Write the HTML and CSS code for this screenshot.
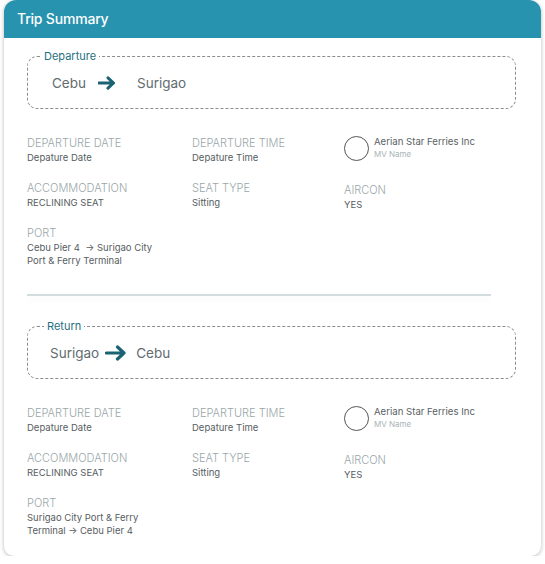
FILE: index.html
```html
<!DOCTYPE html>
<html>
<head>
<meta charset="utf-8">
<link rel="stylesheet" href="styles.css">
</head>
<body>
<div class="card">
  <div class="card-header">Trip Summary</div>
  <div class="card-body">
    <fieldset class="route">
      <legend>Departure</legend>
      <div class="route-line">
        <span class="place">Cebu</span>
        <svg class="arrow" width="18" height="14" viewBox="0 0 18 14"><path d="M1 7H15.5M10 1.8L15.5 7L10 12.2" fill="none" stroke="#1b6273" stroke-width="3" stroke-linecap="round" stroke-linejoin="round"/></svg>
        <span class="place">Surigao</span>
      </div>
    </fieldset>
    <div class="details">
      <div class="item"><div class="label">DEPARTURE DATE</div><div class="value">Depature Date</div></div>
      <div class="item"><div class="label">DEPARTURE TIME</div><div class="value">Depature Time</div></div>
      <div class="vessel"><div class="logo"></div><div><div class="vname">Aerian Star Ferries Inc</div><div class="vsub">MV Name</div></div></div>
      <div class="item"><div class="label">ACCOMMODATION</div><div class="value">RECLINING SEAT</div></div>
      <div class="item"><div class="label">SEAT TYPE</div><div class="value">Sitting</div></div>
      <div class="item low"><div class="label">AIRCON</div><div class="value">YES</div></div>
      <div class="item"><div class="label">PORT</div><div class="value">Cebu Pier 4 &nbsp;→ Surigao City<br>Port &amp; Ferry Terminal</div></div>
    </div>
    <div class="divider"></div>
    <fieldset class="route ret">
      <legend>Return</legend>
      <div class="route-line tight">
        <span class="place">Surigao</span>
        <svg class="arrow big" width="22" height="16" viewBox="0 0 22 16"><path d="M1.5 8H19M12.5 2L19 8L12.5 14" fill="none" stroke="#1b6273" stroke-width="3.2" stroke-linecap="round" stroke-linejoin="round"/></svg>
        <span class="place">Cebu</span>
      </div>
    </fieldset>
    <div class="details">
      <div class="item"><div class="label">DEPARTURE DATE</div><div class="value">Depature Date</div></div>
      <div class="item"><div class="label">DEPARTURE TIME</div><div class="value">Depature Time</div></div>
      <div class="vessel"><div class="logo"></div><div><div class="vname">Aerian Star Ferries Inc</div><div class="vsub">MV Name</div></div></div>
      <div class="item"><div class="label">ACCOMMODATION</div><div class="value">RECLINING SEAT</div></div>
      <div class="item"><div class="label">SEAT TYPE</div><div class="value">Sitting</div></div>
      <div class="item low"><div class="label">AIRCON</div><div class="value">YES</div></div>
      <div class="item"><div class="label">PORT</div><div class="value">Surigao City Port &amp; Ferry<br>Terminal → Cebu Pier 4</div></div>
    </div>
  </div>
</div>
</body>
</html>
```

FILE: styles.css
```css
* { box-sizing: border-box; }
body {
  margin: 0;
  background: #fff;
  font-family: Inter, "Liberation Sans", sans-serif;
}
.card {
  margin: 0 4px;
  width: 537px;
  height: 556px;
  background: #fff;
  border-radius: 12px 12px 10px 10px;
  box-shadow: 0 1px 4px rgba(0,0,0,0.28);
  overflow: hidden;
}
.card-header {
  height: 38px;
  background: #2793af;
  color: #fff;
  font-size: 14px;
  font-weight: 500;
  line-height: 38px;
  padding-left: 13px;
  letter-spacing: -0.2px;
}
.card-body {
  padding: 12px 25px 0 23px;
}
.route {
  margin: 0;
  padding: 0;
  border: 1px dashed #8c8c8c;
  border-radius: 10px;
  height: 59px;
}
.route legend {
  margin-left: 13px;
  padding: 0 3px;
  font-size: 11px;
  line-height: 13px;
  color: #1f6f80;
}
.route.ret legend { margin-left: 16px; }
.route-line {
  display: flex;
  align-items: center;
  height: 38px;
  padding-left: 24px;
  margin-top: 1px;
}
.route-line.tight { padding-left: 22px; }
.place {
  font-size: 13.5px;
  color: #626c70;
}
.arrow { margin: 0 21px 0 12px; }
.arrow.big { margin: 0 9px 0 6px; }
.details {
  display: grid;
  grid-template-columns: 165px 152px 1fr;
  row-gap: 17px;
  margin-top: 27px;
}
.item .label {
  font-size: 11px;
  line-height: 14px;
  color: #99a6a9;
  font-weight: 300;
}
.item .value {
  font-size: 9.5px;
  line-height: 13px;
  margin-top: 1px;
  color: #575d5f;
}
.item.low { margin-top: 2px; margin-bottom: -2px; }
.vessel {
  display: flex;
  align-items: flex-start;
  gap: 5px;
}
.logo {
  width: 25px;
  height: 25px;
  border: 1px solid #555;
  border-radius: 50%;
  flex: none;
}
.vname {
  font-size: 9.6px;
  line-height: 13px;
  color: #5a6164;
  margin-top: -1px;
}
.vsub {
  font-size: 8px;
  line-height: 11px;
  margin-top: 1px;
  color: #aab4b6;
}
.divider {
  width: 464px;
  margin-top: 27px;
  height: 2px;
  background: #d3dcde;
  box-shadow: 0 4px 6px rgba(0,0,0,0.05);
}
.route.ret { margin-top: 24px; }
```
